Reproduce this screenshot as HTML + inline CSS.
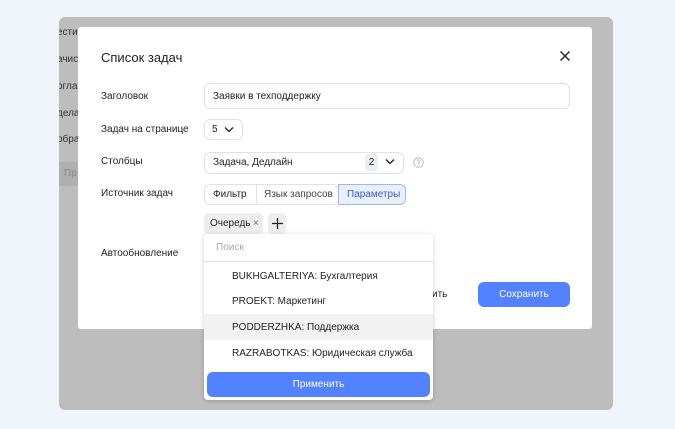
<!DOCTYPE html>
<html><head><meta charset="utf-8"><style>
*{box-sizing:border-box;margin:0;padding:0}
body{width:675px;height:429px;background:#f0f4fb;font-family:"Liberation Sans",sans-serif;font-size:10px;color:#222;position:relative;overflow:hidden}
.a{position:absolute}
.gray{left:59px;top:17px;width:554px;height:393px;background:#bdbdbd;border-radius:6px;overflow:hidden}
.modal{left:78px;top:27px;width:514px;height:302px;background:#fff;border-radius:3px}
.lab{left:101px;font-size:10px;color:#222}
.box{border:1px solid #e2e2e2;border-radius:6px;background:#fff}
.t{font-size:10px;color:#222}
</style></head><body>
<div class="a gray">
 <div class="a t" style="left:-2px;top:10px;color:#333">ести</div>
 <div class="a t" style="left:-2px;top:37px;color:#333">ачис</div>
 <div class="a t" style="left:-2px;top:64px;color:#333">огла</div>
 <div class="a t" style="left:-2px;top:91px;color:#333">дела</div>
 <div class="a t" style="left:-2px;top:117px;color:#333">обра</div>
 <div class="a" style="left:0;top:145px;width:19px;height:24px;background:#b0b0b0"></div>
 <div class="a t" style="left:5px;top:151px;color:#888">Пр</div>
</div>
<div class="a modal"></div>
<div class="a" style="left:101px;top:50px;font-size:13px;color:#222">Список задач</div>
<svg class="a" style="left:560px;top:51px" width="10" height="10"><path d="M0.5 0.5L9.5 9.5M9.5 0.5L0.5 9.5" stroke="#222" stroke-width="1.4"/></svg>
<div class="a lab" style="top:91px">Заголовок</div>
<div class="a box" style="left:204px;top:83px;width:366px;height:26px"></div>
<div class="a t" style="left:213px;top:91px">Заявки в техподдержку</div>
<div class="a lab" style="top:124px">Задач на странице</div>
<div class="a box" style="left:204px;top:119px;width:39px;height:21px"></div>
<div class="a t" style="left:212px;top:124px">5</div>
<svg class="a" style="left:224px;top:126px" width="10" height="7"><path d="M1 1.5L5 5.5L9 1.5" stroke="#222" stroke-width="1.3" fill="none"/></svg>
<div class="a lab" style="top:156px">Столбцы</div>
<div class="a box" style="left:204px;top:152px;width:200px;height:22px"></div>
<div class="a t" style="left:213px;top:157px">Задача, Дедлайн</div>
<div class="a" style="left:365px;top:154px;width:13px;height:17px;background:#eaedf3;border-radius:3px;text-align:center;line-height:17px;font-size:10px">2</div>
<svg class="a" style="left:385px;top:158px" width="10" height="7"><path d="M1 1.5L5 5.5L9 1.5" stroke="#222" stroke-width="1.3" fill="none"/></svg>
<svg class="a" style="left:413px;top:157px" width="11" height="11"><circle cx="5.5" cy="5.5" r="4.8" fill="none" stroke="#bbb"/><text x="5.5" y="8.5" font-size="8" fill="#aaa" text-anchor="middle" font-family="Liberation Sans">?</text></svg>
<div class="a lab" style="top:188px">Источник задач</div>
<div class="a box" style="left:204px;top:184px;width:135px;height:21px"></div>
<div class="a" style="left:256px;top:184px;width:1px;height:21px;background:#e2e2e2"></div>
<div class="a t" style="left:213px;top:189px">Фильтр</div>
<div class="a t" style="left:264px;top:189px;color:#444">Язык запросов</div>
<div class="a" style="left:338px;top:184px;width:68px;height:21px;background:#e8efff;border:1px solid #9db6f5;border-radius:0 6px 6px 0"></div>
<div class="a t" style="left:347px;top:189px;color:#3a5bc7">Параметры</div>
<div class="a" style="left:204px;top:213px;width:59px;height:21px;background:#eeeeef;border-radius:4px"></div>
<div class="a t" style="left:210px;top:218px">Очередь</div>
<div class="a t" style="left:253px;top:218px;color:#666">×</div>
<div class="a" style="left:268px;top:213px;width:18px;height:21px;background:#eeeeef;border-radius:4px"></div>
<svg class="a" style="left:272px;top:218px" width="11" height="11"><path d="M5.5 0V11M0 5.5H11" stroke="#222" stroke-width="1.3"/></svg>
<div class="a lab" style="top:248px">Автообновление</div>
<div class="a t" style="left:432px;top:289px">ить</div>
<div class="a" style="left:478px;top:282px;width:92px;height:25px;background:#5282ff;border-radius:6px;color:#fff;text-align:center;line-height:25px;font-size:10px">Сохранить</div>
<div class="a" style="left:204px;top:234px;width:229px;height:166px;background:#fff;border-radius:4px;box-shadow:0 1px 5px rgba(0,0,0,.2)">
 <div class="a" style="left:12px;top:8px;font-size:10px;color:#aaa">Поиск</div>
 <div class="a" style="left:0;top:27px;width:229px;height:1px;background:#e5e5e5"></div>
 <div class="a t" style="left:28px;top:37px">BUKHGALTERIYA: Бухгалтерия</div>
 <div class="a t" style="left:28px;top:62px">PROEKT: Маркетинг</div>
 <div class="a" style="left:0;top:80px;width:229px;height:26px;background:#f2f2f2"></div>
 <div class="a t" style="left:28px;top:88px">PODDERZHKA: Поддержка</div>
 <div class="a t" style="left:28px;top:114px">RAZRABOTKAS: Юридическая служба</div>
 <div class="a" style="left:3px;top:138px;width:223px;height:25px;background:#5282ff;border-radius:6px;color:#fff;text-align:center;line-height:25px;font-size:10px">Применить</div>
</div>
</body></html>
